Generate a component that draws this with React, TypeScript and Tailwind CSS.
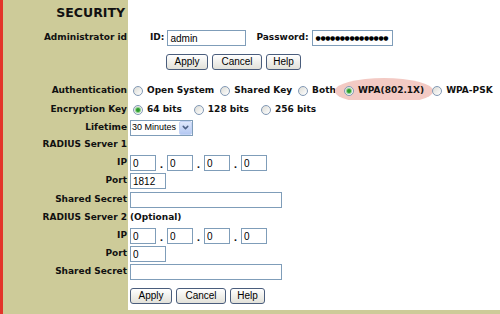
import { ChevronDown } from "lucide-react";
import type { ReactNode } from "react";

const Row = ({
  label,
  h,
  children,
  labelClass = "",
  valueClass = "",
}: {
  label?: ReactNode;
  h: string;
  children?: ReactNode;
  labelClass?: string;
  valueClass?: string;
}) => (
  <div className={`flex ${h}`}>
    <div
      className={`w-[125px] shrink-0 bg-[#cdcb99] flex items-center justify-end pr-[1px] font-bold whitespace-nowrap ${labelClass}`}
    >
      {label}
    </div>
    <div className={`flex-1 min-w-0 bg-white flex items-center whitespace-nowrap ${valueClass}`}>
      {children}
    </div>
  </div>
);

const Radio = ({ checked = false }: { checked?: boolean }) => (
  <span className="w-[10px] h-[10px] shrink-0 rounded-full border border-[#8299b5] bg-linear-to-br from-[#dcdcd6] to-white flex items-center justify-center">
    {checked && (
      <span className="w-[4px] h-[4px] rounded-full bg-[#2c9b2c] ring-1 ring-[#8fd48f]" />
    )}
  </span>
);

const Btn = ({ label, w }: { label: string; w: string }) => (
  <button
    className={`${w} h-[16px] shrink-0 rounded-[3px] border border-[#4a5d7c] bg-linear-to-b from-white to-[#e2e1d9] text-[10px] leading-none text-black font-['Liberation_Sans',Arial,sans-serif] flex items-center justify-center`}
  >
    {label}
  </button>
);

const Field = ({ value = "", w }: { value?: string; w: string }) => (
  <input
    readOnly
    defaultValue={value}
    className={`${w} h-[16px] shrink-0 border border-[#7f9db9] bg-white px-[2px] text-[10px] text-black font-['Liberation_Sans',Arial,sans-serif] outline-none`}
  />
);

const Dot = () => (
  <span className="w-[11px] self-end mb-[1px] text-center font-bold leading-none">.</span>
);

const IpFields = () => (
  <div className="flex items-center h-[16px] pl-[2px]">
    <Field value="0" w="w-[26px]" />
    <Dot />
    <Field value="0" w="w-[26px]" />
    <Dot />
    <Field value="0" w="w-[26px]" />
    <Dot />
    <Field value="0" w="w-[26px]" />
  </div>
);

const Opt = ({ label, checked }: { label: string; checked?: boolean }) => (
  <span className="flex shrink-0 items-center gap-[4px] font-bold whitespace-nowrap">
    <Radio checked={checked} />
    <span>{label}</span>
  </span>
);

export default function App() {
  return (
    <div className="w-[500px] h-[314px] flex flex-col bg-[#cdcb99] border-l-[3px] border-[#e3342a] text-[9px] text-[#111] font-['DejaVu_Sans',Verdana,sans-serif] overflow-hidden">
      <Row label="SECURITY" h="h-[26px]" labelClass="text-[12.5px] pr-[3px]" />
      <Row label="Administrator id" h="h-[24px]" valueClass="pl-[22px]">
        <span className="font-bold mr-[3px]">ID:</span>
        <Field value="admin" w="w-[79px]" />
        <span className="font-bold ml-[10px] mr-[3px]">Password:</span>
        <div className="w-[81px] h-[16px] shrink-0 border border-[#7f9db9] bg-white pl-[3px] flex items-center text-[6px] leading-none tracking-[-0.4px] text-black overflow-hidden">
          ●●●●●●●●●●●●●●●
        </div>
      </Row>
      <Row h="h-[24px]" valueClass="pl-[38px] gap-[4px]">
        <Btn label="Apply" w="w-[42px]" />
        <Btn label="Cancel" w="w-[50px]" />
        <Btn label="Help" w="w-[35px]" />
      </Row>
      <Row h="h-[8px]" />
      <Row label="Authentication" h="h-[18px]" valueClass="pl-[5px]">
        <div className="flex items-center gap-[6px]">
          <Opt label="Open System" />
          <Opt label="Shared Key" />
          <Opt label="Both" />
          <span className="-mx-[7px] -my-[4px] px-[9px] py-[6px] shrink-0 rounded-[50%] bg-[#f3cac4] flex items-center">
            <Opt label="WPA(802.1X)" checked />
          </span>
          <Opt label="WPA-PSK" />
        </div>
      </Row>
      <Row label="Encryption Key" h="h-[19px]" valueClass="pl-[5px]">
        <div className="flex items-center gap-[12px]">
          <Opt label="64 bits" checked />
          <Opt label="128 bits" />
          <Opt label="256 bits" />
        </div>
      </Row>
      <Row label="Lifetime" h="h-[17px]" valueClass="pl-[2px]">
        <div className="w-[63px] h-[16px] border border-[#7f9db9] bg-white flex items-center">
          <span className="flex-1 min-w-0 pl-[1px] text-[9px] text-black font-['Liberation_Sans',Arial,sans-serif] whitespace-nowrap overflow-hidden">
            30 Minutes
          </span>
          <span className="w-[13px] h-[14px] shrink-0 rounded-[2px] bg-linear-to-b from-[#dfe8fb] to-[#b4c8f2] border border-[#c3d3f5] flex items-center justify-center">
            <ChevronDown className="w-[9px] h-[9px] text-[#4d6185]" strokeWidth={4} />
          </span>
        </div>
      </Row>
      <Row label="RADIUS Server 1" h="h-[18px]" />
      <Row label="IP" h="h-[18px]">
        <IpFields />
      </Row>
      <Row label="Port" h="h-[18px]" valueClass="pl-[2px]">
        <Field value="1812" w="w-[36px]" />
      </Row>
      <Row label="Shared Secret" h="h-[19px]" valueClass="pl-[2px]">
        <Field w="w-[152px]" />
      </Row>
      <Row label="RADIUS Server 2" h="h-[18px]" valueClass="pl-[2px]">
        <span className="font-bold">(Optional)</span>
      </Row>
      <Row label="IP" h="h-[18px]">
        <IpFields />
      </Row>
      <Row label="Port" h="h-[18px]" valueClass="pl-[2px]">
        <Field value="0" w="w-[36px]" />
      </Row>
      <Row label="Shared Secret" h="h-[18px]" valueClass="pl-[2px]">
        <Field w="w-[152px]" />
      </Row>
      <Row h="h-[29px]" valueClass="pl-[2px] gap-[4px] !items-start pt-[7px]">
        <Btn label="Apply" w="w-[42px]" />
        <Btn label="Cancel" w="w-[50px]" />
        <Btn label="Help" w="w-[35px]" />
      </Row>
      <div className="h-[4px] bg-[#cdcb99]" />
    </div>
  );
}
